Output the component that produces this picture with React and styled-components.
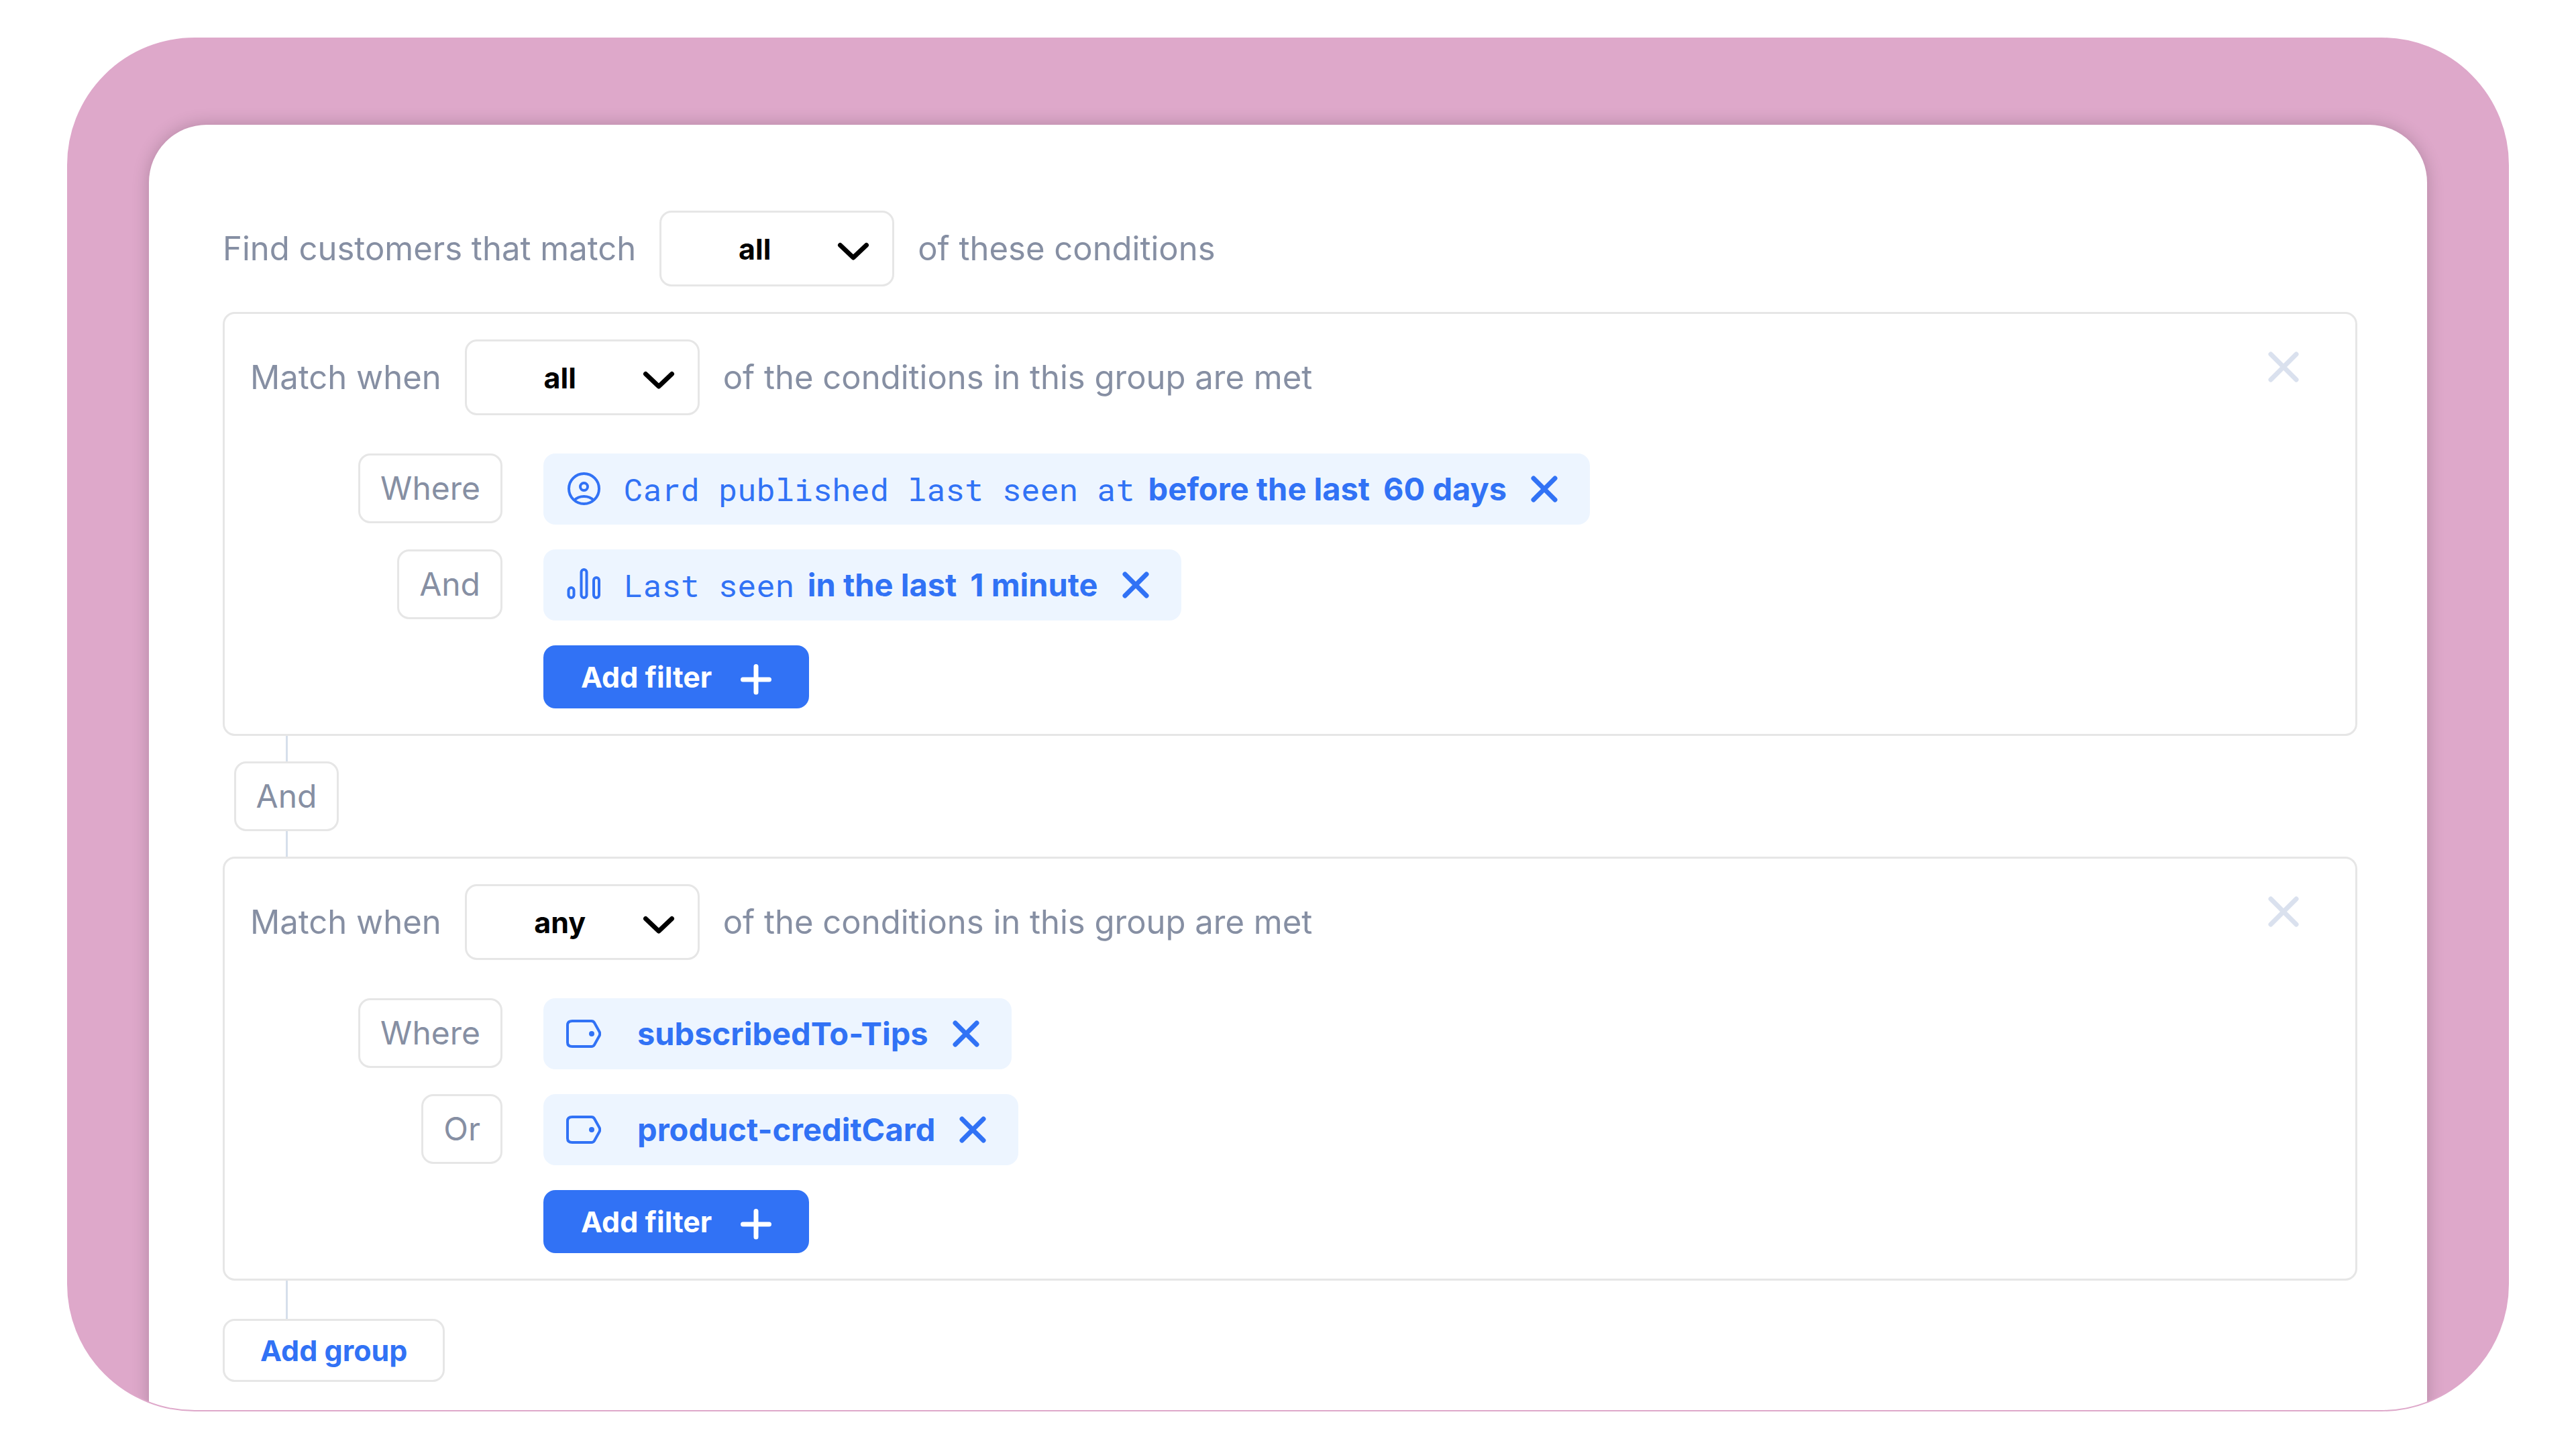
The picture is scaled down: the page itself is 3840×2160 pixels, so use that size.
import { useId, useState } from 'react';
import styled, { createGlobalStyle } from 'styled-components';

const Palette = {
  pink: '#dea8ca',
  blue: '#3172f5',
  blueSoft: '#edf5ff',
  text: '#868fa3',
  border: '#e6e6e6',
  line: '#d6dfeb',
  cross: '#dae1ee',
};

const GlobalStyle = createGlobalStyle`
  * {
    box-sizing: border-box;
  }
  body {
    margin: 0;
    background-color: white;
    font-family: Inter, 'Liberation Sans', sans-serif;
  }
  button,
  select {
    font-family: inherit;
    cursor: pointer;
  }
  svg {
    display: block;
    flex: none;
  }
`;

const Page = styled.div`
  display: flex;
  min-height: 100vh;
  padding: 56px 100px;
`;

const Frame = styled.div`
  flex: 1;
  display: flex;
  padding: 128px 120px 0;
  background-color: ${Palette.pink};
  border: 2px solid ${Palette.pink};
  border-radius: 190px;
  overflow: hidden;
`;

const Panel = styled.main`
  flex: 1;
  padding: 128px 104px 40px 110px;
  background-color: white;
  border-radius: 86px 86px 0 0;
  box-shadow: 0 0 26px rgba(0, 0, 0, 0.2);
`;

const Sentence = styled.header`
  display: flex;
  align-items: center;
  gap: 35px;
  margin-bottom: ${(props) => props.$space}px;
  color: ${Palette.text};
  font-size: 49px;
  line-height: 60px;
`;

const SelectBox = styled.span`
  display: grid;
  align-items: center;
  width: 350px;

  & select,
  & svg {
    grid-area: 1 / 1;
  }
  & svg {
    justify-self: end;
    margin-right: 36px;
    pointer-events: none;
  }
`;

const Select = styled.select`
  height: 113px;
  padding: 0 66px 0 0;
  appearance: none;
  background-color: white;
  border: 3px solid ${Palette.border};
  border-radius: 18px;
  color: black;
  font-size: 43px;
  font-weight: 700;
  text-align-last: center;
`;

const Group = styled.section`
  padding: 38px;
  border: 3px solid ${Palette.border};
  border-radius: 18px;
`;

const RemoveGroup = styled.button`
  align-self: flex-start;
  margin-left: auto;
  margin-right: 24px;
  padding: 16px 20px;
  background: none;
  border: none;
  color: ${Palette.cross};
`;

const Filters = styled.div`
  display: grid;
  grid-template-columns: 376px 1fr;
  column-gap: 61px;
  row-gap: 37px;
  align-items: start;
`;

const Badge = styled.span`
  justify-self: end;
  padding: 19px 30px;
  background-color: white;
  border: 3px solid ${Palette.border};
  border-radius: 18px;
  color: ${Palette.text};
  font-size: 48px;
  line-height: 60px;
`;

const Chip = styled.div`
  justify-self: start;
  display: flex;
  align-items: center;
  height: 106px;
  padding: 0 46px 0 34px;
  background-color: ${Palette.blueSoft};
  border-radius: 18px;
  color: ${Palette.blue};
  font-size: 47px;
  line-height: 60px;
  white-space: nowrap;
`;

const Attribute = styled.span`
  margin-left: 34px;
  font-family: 'Roboto Mono', 'Liberation Mono', monospace;
`;

const Condition = styled.strong`
  margin-left: 20px;
  font-weight: 700;
`;

const TagName = styled.strong`
  margin-left: 54px;
  font-weight: 700;
`;

const RemoveFilter = styled.button`
  margin-left: 34px;
  padding: 0;
  background: none;
  border: none;
  color: ${Palette.blue};
`;

const AddFilter = styled.button`
  grid-column: 2;
  justify-self: start;
  display: flex;
  align-items: center;
  gap: 43px;
  height: 94px;
  padding: 0 56px;
  background-color: ${Palette.blue};
  border: none;
  border-radius: 18px;
  color: white;
  font-size: 43px;
  font-weight: 700;
`;

const AddGroup = styled.button`
  display: block;
  height: 94px;
  padding: 0 53px;
  background-color: white;
  border: 3px solid ${Palette.border};
  border-radius: 18px;
  color: ${Palette.blue};
  font-size: 43px;
  font-weight: 700;
`;

const Joiner = styled.div`
  display: flex;
  flex-direction: column;
  align-items: center;
  width: 190px;
`;

const Line = styled.span`
  width: 3px;
  height: ${(props) => props.$length}px;
  background-color: ${Palette.line};
`;

const Chevron = () => (
  <svg width="50" height="38" viewBox="0 0 50 38" fill="none" stroke="black" strokeWidth="7" strokeLinecap="round" strokeLinejoin="round" aria-hidden="true">
    <path d="M5.5 13.5 25 32 44.5 13.5" />
  </svg>
);

const Cross = ({ size, width }) => (
  <svg width={size} height={size} viewBox={`0 0 ${size} ${size}`} stroke="currentColor" strokeWidth={width} strokeLinecap="round" aria-hidden="true">
    <path d={`M6 6 ${size - 6} ${size - 6} M${size - 6} 6 6 ${size - 6}`} />
  </svg>
);

const Plus = () => (
  <svg width="46" height="54" viewBox="0 0 46 54" stroke="currentColor" strokeWidth="7" strokeLinecap="round" aria-hidden="true">
    <path d="M23 11.5V50M3.5 31H42.5" />
  </svg>
);

const icons = {
  person: (
    <>
      <circle cx="26.5" cy="25.5" r="22.5" />
      <circle cx="26.5" cy="22.5" r="5.5" />
      <path d="M12 43C15.500 39 20.500 37 26.500 37S37.500 39 41 43" />
    </>
  ),
  bars: (
    <>
      <rect x="3.500" y="30" width="8" height="15" rx="4" />
      <rect x="22.500" y="3" width="8" height="42" rx="4" />
      <rect x="41" y="15" width="8" height="30" rx="4" />
    </>
  ),
  tag: (
    <>
      <path d="M9 7H37.500C39.500 7 41 7.800 42 9.500L49.500 23C50.500 25 50.500 27 49.500 29L42 42.500C41 44.200 39.500 45 37.500 45H9C4.500 45 2 43 2 39V13C2 9 4.500 7 9 7Z" />
      <circle cx="38" cy="26" r="2" fill="currentColor" />
    </>
  ),
};

const FilterIcon = ({ name }) => (
  <svg width="52" height="52" viewBox="0 0 52 52" fill="none" stroke="currentColor" strokeWidth="4" strokeLinejoin="round" aria-hidden="true">
    {icons[name]}
  </svg>
);

const MatchSentence = ({ before, after, initial, space, children }) => {
  const id = useId();
  const [match, setMatch] = useState(initial);

  return (
    <Sentence $space={space}>
      <label htmlFor={id}>{before}</label>
      <SelectBox>
        <Select id={id} value={match} onChange={(e) => setMatch(e.target.value)}>
          <option value="all">all</option>
          <option value="any">any</option>
        </Select>
        <Chevron />
      </SelectBox>
      <span>{after}</span>
      {children}
    </Sentence>
  );
};

const groups = [
  {
    id: 'seen',
    match: 'all',
    filters: [
      {
        joint: 'Where',
        icon: 'person',
        attribute: 'Card published last seen at',
        condition: ['before the last', '60 days'],
      },
      {
        joint: 'And',
        icon: 'bars',
        attribute: 'Last seen',
        condition: ['in the last', '1 minute'],
      },
    ],
  },
  {
    id: 'tags',
    match: 'any',
    filters: [
      { joint: 'Where', icon: 'tag', tag: 'subscribedTo-Tips' },
      { joint: 'Or', icon: 'tag', tag: 'product-creditCard' },
    ],
  },
];

const Filter = ({ filter }) => (
  <>
    <Badge>{filter.joint}</Badge>
    <Chip>
      <FilterIcon name={filter.icon} />
      {filter.tag ? (
        <TagName>{filter.tag}</TagName>
      ) : (
        <>
          <Attribute>{filter.attribute}</Attribute>
          {filter.condition.map((part) => (
            <Condition key={part}>{part}</Condition>
          ))}
        </>
      )}
      <RemoveFilter type="button" aria-label="Remove filter">
        <Cross size={44} width={7} />
      </RemoveFilter>
    </Chip>
  </>
);

const App = () => {
  return (
    <>
      <GlobalStyle />
      <Page>
        <Frame>
          <Panel>
            <MatchSentence
              before="Find customers that match"
              after="of these conditions"
              initial="all"
              space={38}
            />
            {groups.map((group, index) => (
              <div key={group.id}>
                {index > 0 && (
                  <Joiner>
                    <Line $length={38} />
                    <Badge>And</Badge>
                    <Line $length={38} />
                  </Joiner>
                )}
                <Group>
                  <MatchSentence
                    before="Match when"
                    after="of the conditions in this group are met"
                    initial={group.match}
                    space={57}
                  >
                    <RemoveGroup type="button" aria-label="Remove group">
                      <Cross size={50} width={7} />
                    </RemoveGroup>
                  </MatchSentence>
                  <Filters>
                    {group.filters.map((filter) => (
                      <Filter key={filter.joint} filter={filter} />
                    ))}
                    <AddFilter type="button">
                      Add filter
                      <Plus />
                    </AddFilter>
                  </Filters>
                </Group>
              </div>
            ))}
            <Joiner>
              <Line $length={57} />
            </Joiner>
            <AddGroup type="button">Add group</AddGroup>
          </Panel>
        </Frame>
      </Page>
    </>
  );
};

export default App;
